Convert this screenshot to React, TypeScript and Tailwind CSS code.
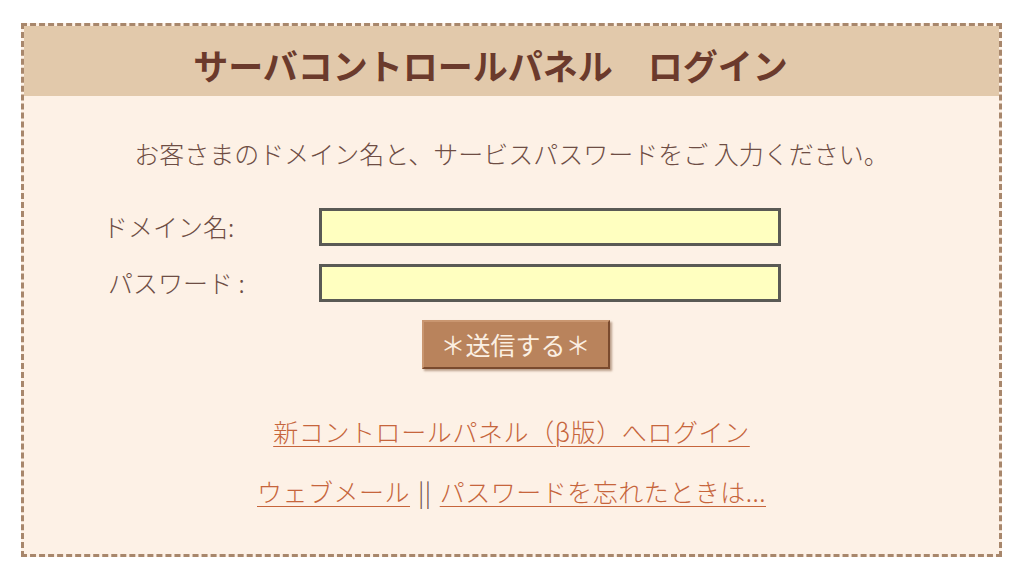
export default function App() {
  return (
    <div className="min-h-[580px] w-[1024px] bg-white pt-[23px] pl-[21px] font-['Noto_Sans_CJK_JP',sans-serif]">
      <div className="w-[981px] h-[534px] border-[3px] border-dashed border-[#a8876c] bg-[#fdf1e6] flex flex-col">
        {/* Header */}
        <div className="h-[70px] bg-[#e2c9ab] flex items-center justify-center pt-[6px] pr-[42px]">
          <h1 className="text-[35px] font-bold text-[#6b3a2c] leading-none">
            サーバコントロールパネル　ログイン
          </h1>
        </div>

        {/* Body */}
        <div className="flex flex-col items-center pt-[40px]">
          <p className="text-[25px] leading-[34px] text-[#6e4d44] font-light">
            お客さまのドメイン名と、サービスパスワードをご 入力ください。
          </p>

          <div className="w-full mt-[38px] flex flex-col gap-[18px]">
            <div className="flex items-center">
              <span className="w-[295px] pl-[79px] text-[25px] font-light text-[#6e4d44]">ドメイン名:</span>
              <div className="w-[462px] h-[38px] border-[3px] border-[#5a5a55] bg-[#ffffc0]" />
            </div>
            <div className="flex items-center">
              <span className="w-[295px] pl-[84px] text-[25px] font-light text-[#6e4d44]">パスワード :</span>
              <div className="w-[462px] h-[38px] border-[3px] border-[#5a5a55] bg-[#ffffc0]" />
            </div>
          </div>

          <button className="mt-[18px] ml-[8px] w-[188px] h-[49px] bg-[#b9835c] border-2 border-t-[#c99670] border-l-[#c99670] border-r-[#7a4a2e] border-b-[#7a4a2e] shadow-[2px_2px_2px_rgba(120,80,50,0.5)] text-[#fbefe2] text-[25px] flex items-center justify-center">
            ＊送信する＊
          </button>

          <a className="mt-[44px] text-[25px] font-light tracking-[0.6px] text-[#c6653c] underline underline-offset-[4px] decoration-1">
            新コントロールパネル（β版）へログイン
          </a>

          <div className="mt-[22px] text-[25px] font-light tracking-[0.5px] flex items-center gap-[8px]">
            <a className="text-[#c6653c] underline underline-offset-[4px] decoration-1">ウェブメール</a>
            <span className="text-[#6e4d44]">||</span>
            <a className="text-[#c6653c] underline underline-offset-[4px] decoration-1">パスワードを忘れたときは...</a>
          </div>
        </div>
      </div>
    </div>
  );
}
